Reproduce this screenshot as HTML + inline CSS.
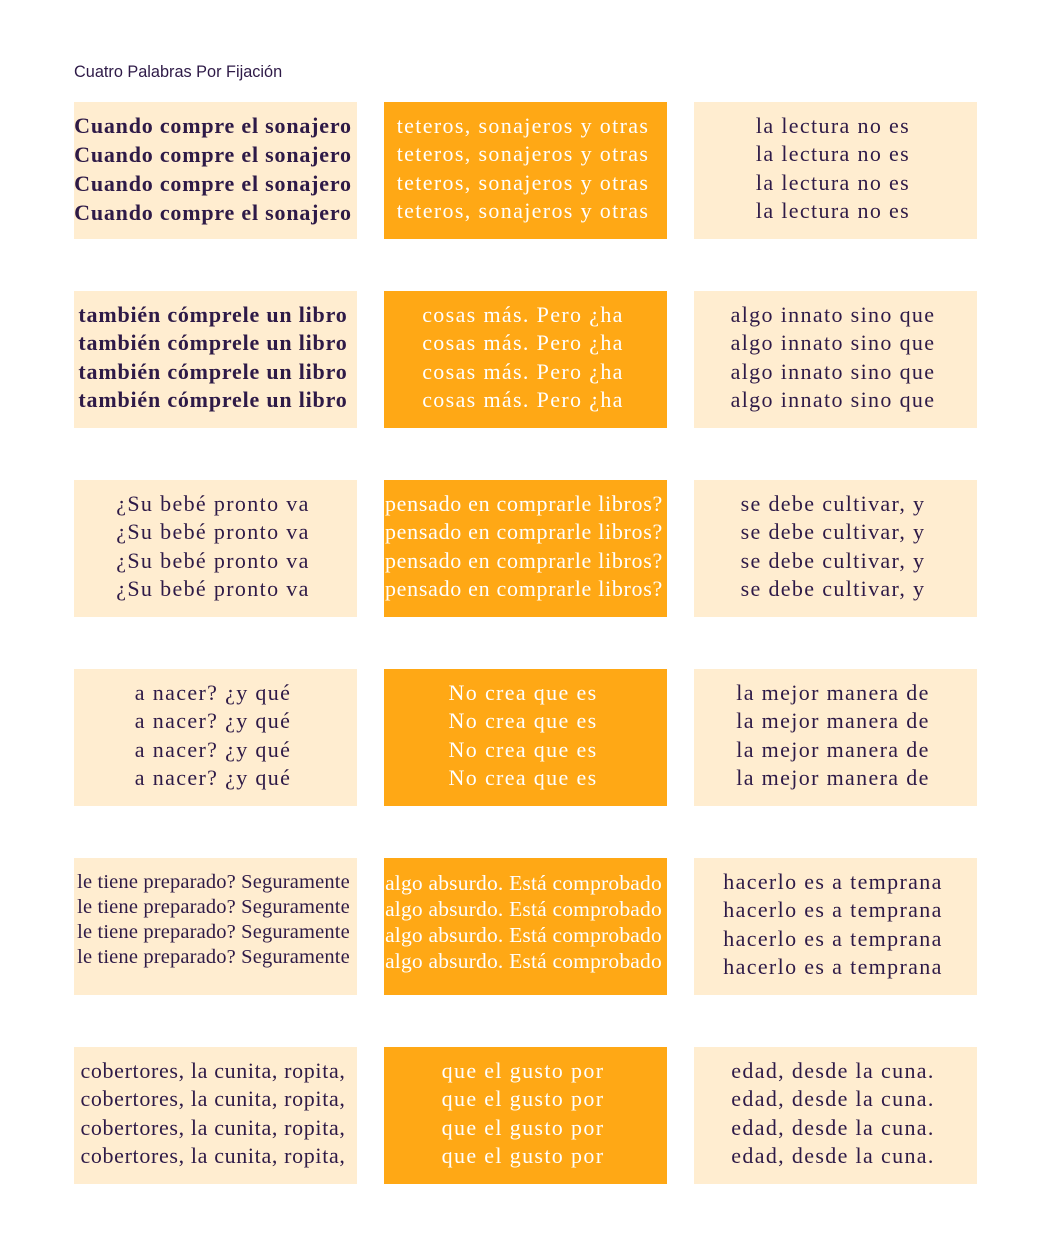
<!DOCTYPE html>
<html><head><meta charset="utf-8"><style>
body{margin:0;width:1050px;height:1250px;background:#fff;position:relative;font-family:"Liberation Serif",serif;color:#2e1a47}
.t{position:absolute;left:74px;top:63px;font:16.3px "Liberation Sans",sans-serif;color:#2e1a47}
.b{position:absolute;width:283px;height:137px;display:flex;flex-direction:column;justify-content:center;align-items:center;white-space:nowrap;font-size:22px;line-height:28.5px;letter-spacing:1.35px;padding-bottom:4px;padding-right:5px;box-sizing:border-box}
.l{background:#ffedd0}
.o{background:#ffa815;color:#fff}
.bold{font-weight:bold;letter-spacing:0.8px;line-height:29px}
</style></head><body>
<div class="t">Cuatro Palabras Por Fijación</div>

<div class="b l bold" style="left:74px;top:102px"><div>Cuando compre el sonajero</div><div>Cuando compre el sonajero</div><div>Cuando compre el sonajero</div><div>Cuando compre el sonajero</div></div>
<div class="b o" style="left:384px;top:102px"><div>teteros, sonajeros y otras</div><div>teteros, sonajeros y otras</div><div>teteros, sonajeros y otras</div><div>teteros, sonajeros y otras</div></div>
<div class="b l" style="left:694px;top:102px"><div>la lectura no es</div><div>la lectura no es</div><div>la lectura no es</div><div>la lectura no es</div></div>

<div class="b l bold" style="left:74px;top:291px;line-height:28.5px"><div>también cómprele un libro</div><div>también cómprele un libro</div><div>también cómprele un libro</div><div>también cómprele un libro</div></div>
<div class="b o" style="left:384px;top:291px"><div>cosas más. Pero ¿ha</div><div>cosas más. Pero ¿ha</div><div>cosas más. Pero ¿ha</div><div>cosas más. Pero ¿ha</div></div>
<div class="b l" style="left:694px;top:291px"><div>algo innato sino que</div><div>algo innato sino que</div><div>algo innato sino que</div><div>algo innato sino que</div></div>

<div class="b l" style="left:74px;top:480px"><div>¿Su bebé pronto va</div><div>¿Su bebé pronto va</div><div>¿Su bebé pronto va</div><div>¿Su bebé pronto va</div></div>
<div class="b o" style="left:384px;top:480px;letter-spacing:0.7px;padding-right:3px"><div>pensado en comprarle libros?</div><div>pensado en comprarle libros?</div><div>pensado en comprarle libros?</div><div>pensado en comprarle libros?</div></div>
<div class="b l" style="left:694px;top:480px"><div>se debe cultivar, y</div><div>se debe cultivar, y</div><div>se debe cultivar, y</div><div>se debe cultivar, y</div></div>

<div class="b l" style="left:74px;top:669px"><div>a nacer? ¿y qué</div><div>a nacer? ¿y qué</div><div>a nacer? ¿y qué</div><div>a nacer? ¿y qué</div></div>
<div class="b o" style="left:384px;top:669px"><div>No crea que es</div><div>No crea que es</div><div>No crea que es</div><div>No crea que es</div></div>
<div class="b l" style="left:694px;top:669px"><div>la mejor manera de</div><div>la mejor manera de</div><div>la mejor manera de</div><div>la mejor manera de</div></div>

<div class="b l" style="left:74px;top:858px;font-size:20.5px;line-height:25px;letter-spacing:0.15px;padding-bottom:14px;padding-right:4px"><div>le tiene preparado? Seguramente</div><div>le tiene preparado? Seguramente</div><div>le tiene preparado? Seguramente</div><div>le tiene preparado? Seguramente</div></div>
<div class="b o" style="left:384px;top:858px;font-size:21.5px;line-height:26px;letter-spacing:0.2px;padding-bottom:10px;padding-right:4px"><div>algo absurdo. Está comprobado</div><div>algo absurdo. Está comprobado</div><div>algo absurdo. Está comprobado</div><div>algo absurdo. Está comprobado</div></div>
<div class="b l" style="left:694px;top:858px"><div>hacerlo es a temprana</div><div>hacerlo es a temprana</div><div>hacerlo es a temprana</div><div>hacerlo es a temprana</div></div>

<div class="b l" style="left:74px;top:1047px;letter-spacing:0.65px"><div>cobertores, la cunita, ropita,</div><div>cobertores, la cunita, ropita,</div><div>cobertores, la cunita, ropita,</div><div>cobertores, la cunita, ropita,</div></div>
<div class="b o" style="left:384px;top:1047px"><div>que el gusto por</div><div>que el gusto por</div><div>que el gusto por</div><div>que el gusto por</div></div>
<div class="b l" style="left:694px;top:1047px"><div>edad, desde la cuna.</div><div>edad, desde la cuna.</div><div>edad, desde la cuna.</div><div>edad, desde la cuna.</div></div>
</body></html>
